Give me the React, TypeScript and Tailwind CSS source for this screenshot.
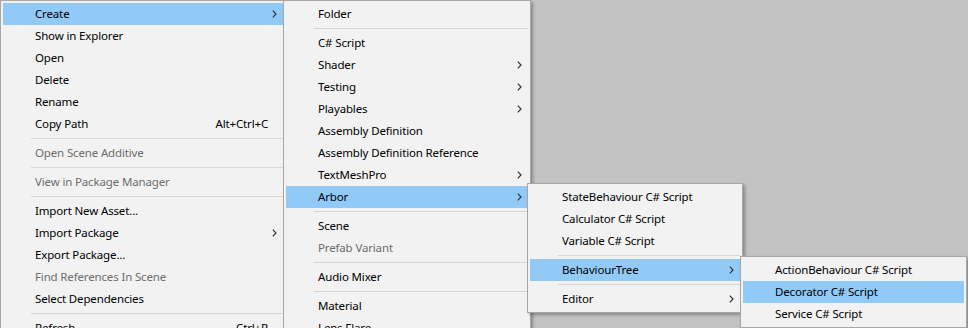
import React from "react";

type Item =
  | "sep"
  | { label: string; shortcut?: string; sub?: boolean; disabled?: boolean; active?: boolean };

const Chevron = () => (
  <svg width="5" height="8" viewBox="0 0 5 8" className="absolute right-[6px] top-[7px]">
    <path d="M0.8 0.6 L4 4 L0.8 7.4" fill="none" stroke="#333" strokeWidth="1.2" />
  </svg>
);

function Menu({ items, className }: { items: Item[]; className: string }) {
  return (
    <div
      className={
        "border border-[#a8a8a8] bg-[#f2f2f2] p-[2px] shadow-[2px_2px_3px_rgba(0,0,0,0.3)] " + className
      }
    >
      {items.map((it, i) =>
        it === "sep" ? (
          <div key={i} className="h-[7px] pl-[28px] pt-[3px]">
            <div className="h-px bg-[#d7d7d7]" />
          </div>
        ) : (
          <div
            key={i}
            className={
              "relative flex h-[22px] items-center whitespace-nowrap pl-[32px] " +
              (it.active ? "bg-[#91c9f7] " : "") +
              (it.disabled ? "text-[#6d6d6d]" : "text-[#000000]")
            }
          >
            <span>{it.label}</span>
            {it.shortcut && <span className="absolute right-[15px]">{it.shortcut}</span>}
            {it.sub && <Chevron />}
          </div>
        )
      )}
    </div>
  );
}

const mainItems: Item[] = [
  { label: "Create", sub: true, active: true },
  { label: "Show in Explorer" },
  { label: "Open" },
  { label: "Delete" },
  { label: "Rename" },
  { label: "Copy Path", shortcut: "Alt+Ctrl+C" },
  "sep",
  { label: "Open Scene Additive", disabled: true },
  "sep",
  { label: "View in Package Manager", disabled: true },
  "sep",
  { label: "Import New Asset..." },
  { label: "Import Package", sub: true },
  { label: "Export Package..." },
  { label: "Find References In Scene", disabled: true },
  { label: "Select Dependencies" },
  "sep",
  { label: "Refresh", shortcut: "Ctrl+R" },
];

const createItems: Item[] = [
  { label: "Folder" },
  "sep",
  { label: "C# Script" },
  { label: "Shader", sub: true },
  { label: "Testing", sub: true },
  { label: "Playables", sub: true },
  { label: "Assembly Definition" },
  { label: "Assembly Definition Reference" },
  { label: "TextMeshPro", sub: true },
  { label: "Arbor", sub: true, active: true },
  "sep",
  { label: "Scene" },
  { label: "Prefab Variant", disabled: true },
  "sep",
  { label: "Audio Mixer" },
  "sep",
  { label: "Material" },
  { label: "Lens Flare" },
];

const arborItems: Item[] = [
  { label: "StateBehaviour C# Script" },
  { label: "Calculator C# Script" },
  { label: "Variable C# Script" },
  "sep",
  { label: "BehaviourTree", sub: true, active: true },
  "sep",
  { label: "Editor", sub: true },
];

const btItems: Item[] = [
  { label: "ActionBehaviour C# Script" },
  { label: "Decorator C# Script", active: true },
  { label: "Service C# Script" },
];

export default function App() {
  return (
    <div
      className="relative h-[328px] w-[968px] overflow-hidden bg-[#c3c3c3] text-[11.5px] tracking-[-0.15px]"
      style={{ fontFamily: '"Noto Sans", "Open Sans", sans-serif' }}
    >
      <Menu items={mainItems} className="w-[286px]" />
      <Menu items={createItems} className="absolute left-[283px] top-0 w-[248px]" />
      <Menu items={arborItems} className="absolute left-[527px] top-[183px] w-[216px]" />
      <Menu items={btItems} className="absolute left-[740px] top-[256px] w-[227px]" />
    </div>
  );
}
